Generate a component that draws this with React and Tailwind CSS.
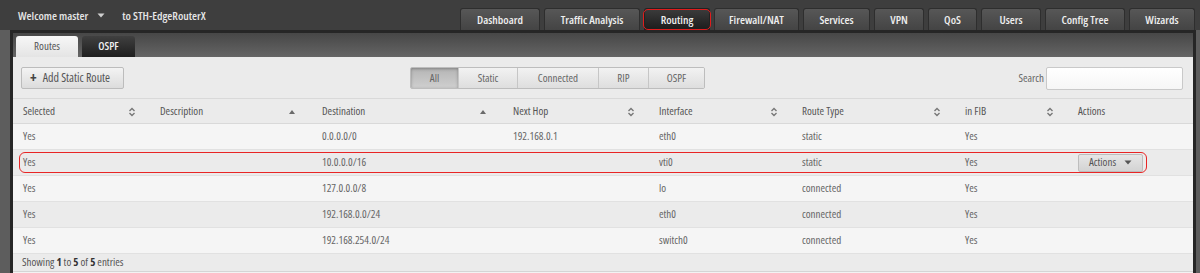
import React from 'react';

const navTabs = [
    { label: 'Dashboard', w: 'w-[80px]' },
    { label: 'Traffic Analysis', w: 'w-[96px]' },
    { label: 'Routing', w: 'w-[66px]', active: true },
    { label: 'Firewall/NAT', w: 'w-[85px]' },
    { label: 'Services', w: 'w-[67px]' },
    { label: 'VPN', w: 'w-[50px]' },
    { label: 'QoS', w: 'w-[49px]' },
    { label: 'Users', w: 'w-[60px]' },
    { label: 'Config Tree', w: 'w-[80px]' },
    { label: 'Wizards', w: 'w-[66px]' },
];

const filters = [
    { label: 'All', w: 'w-[47px]', active: true },
    { label: 'Static', w: 'w-[59px]' },
    { label: 'Connected', w: 'w-[81px]' },
    { label: 'RIP', w: 'w-[50px]' },
    { label: 'OSPF', w: 'w-[56px]' },
];

const columns = [
    { label: 'Selected', sort: 'both' },
    { label: 'Description', sort: 'up' },
    { label: 'Destination', sort: 'up' },
    { label: 'Next Hop', sort: 'both' },
    { label: 'Interface', sort: 'both' },
    { label: 'Route Type', sort: 'both' },
    { label: 'in FIB', sort: 'both' },
    { label: 'Actions', sort: null },
];

const routes = [
    { dest: '0.0.0.0/0', hop: '192.168.0.1', iface: 'eth0', type: 'static' },
    { dest: '10.0.0.0/16', hop: '', iface: 'vti0', type: 'static', marked: true },
    { dest: '127.0.0.0/8', hop: '', iface: 'lo', type: 'connected' },
    { dest: '192.168.0.0/24', hop: '', iface: 'eth0', type: 'connected' },
    { dest: '192.168.254.0/24', hop: '', iface: 'switch0', type: 'connected' },
];

const grid = 'grid grid-cols-[137px_162px_191px_146px_143px_163px_113px_124px]';

const SortIcon = ({ type }) => {
    if (type === 'up') {
        return (
            <svg width="8" height="6" viewBox="0 0 8 6" className="absolute right-[16px] top-[10px]">
                <path d="M4 1 L7 5 L1 5 Z" fill="#6a6a6a" />
            </svg>
        );
    }
    return (
        <svg width="8" height="10" viewBox="0 0 8 10" className="absolute right-[14px] top-[8px]">
            <path d="M1.5 4 L4 1.5 L6.5 4" stroke="#777" strokeWidth="1.4" fill="none" />
            <path d="M1.5 6 L4 8.5 L6.5 6" stroke="#777" strokeWidth="1.4" fill="none" />
        </svg>
    );
};

const Caret = ({ color = '#cfcfcf' }) => (
    <svg width="8" height="5" viewBox="0 0 8 5">
        <path d="M0.5 0.5 L7.5 0.5 L4 4.5 Z" fill={color} />
    </svg>
);

const App = () => {
    return (
        <div className="w-[1200px] h-[273px] overflow-hidden bg-[#5d5d5d] text-[11px] [font-stretch:80%] font-['Open_Sans',_'Liberation_Sans',_sans-serif]">
            {/* top bar */}
            <div className="h-[30px] bg-[#3e3e3e] flex items-end">
                <div className="h-[30px] flex items-center pl-[18px] pt-[2px] text-[11.5px] text-[#e6e6e6] font-semibold">
                    <span>Welcome master</span>
                    <span className="ml-[9px] mb-[1px]"><Caret /></span>
                    <span className="ml-[17px]">to STH-EdgeRouterX</span>
                </div>
                <div className="ml-auto mr-[5px] flex gap-[4px]">
                    {navTabs.map((t) => (
                        <div
                            key={t.label}
                            className={`relative ${t.w} h-[22px] flex items-center justify-center rounded-t-[3px] border border-b-0 font-semibold text-[11.5px] text-[#eeeeee] ${
                                t.active
                                    ? 'bg-gradient-to-b from-[#3c3c3c] to-[#1c1c1c] border-[#222]'
                                    : 'bg-gradient-to-b from-[#575757] to-[#444444] border-[#2e2e2e]'
                            }`}
                        >
                            {t.label}
                            {t.active && (
                                <div className="absolute -left-[2px] -right-[2px] top-0 bottom-0 rounded-[5px] border-[1.5px] border-[#e01d1d]" />
                            )}
                        </div>
                    ))}
                </div>
            </div>

            {/* main panel */}
            <div className="ml-[10px] w-[1186px] h-[260px] border-[3px] border-b-0 border-[#262626] bg-[#ebebeb]">
                {/* sub tabs */}
                <div className="h-[24px] bg-gradient-to-b from-[#474747] to-[#656565] flex items-end pl-[3px] gap-[4px]">
                    <div className="w-[62px] h-[21px] flex items-center justify-center rounded-t-[3px] bg-gradient-to-b from-[#f7f7f7] to-[#e4e4e4] text-[#555]">
                        Routes
                    </div>
                    <div className="w-[53px] h-[21px] flex items-center justify-center rounded-t-[3px] bg-gradient-to-b from-[#404040] to-[#1f1f1f] text-[#f0f0f0] font-semibold">
                        OSPF
                    </div>
                </div>

                {/* toolbar */}
                <div className="h-[41px] flex items-center pl-[8px] pr-[10px] pt-[1px]">
                    <button className="w-[103px] h-[22px] flex items-center pl-[8px] gap-[6px] whitespace-nowrap rounded-[2px] border border-[#bcbcbc] bg-gradient-to-b from-[#f3f3f3] to-[#dcdcdc] text-[12px] text-[#555]">
                        <span className="text-[14px] leading-none font-bold text-[#444]">+</span>
                        <span>Add Static Route</span>
                    </button>
                    <div className="ml-[286px] flex h-[22px] rounded-[2px] border border-[#bdbdbd] overflow-hidden">
                        {filters.map((f, i) => (
                            <div
                                key={f.label}
                                className={`${f.w} flex items-center justify-center text-[#666] ${i > 0 ? 'border-l border-[#c6c6c6]' : ''} ${
                                    f.active
                                        ? 'bg-gradient-to-b from-[#b5b5b5] to-[#cfcfcf] shadow-[inset_0_1px_3px_rgba(0,0,0,0.3)]'
                                        : 'bg-gradient-to-b from-[#f2f2f2] to-[#dedede]'
                                }`}
                            >
                                {f.label}
                            </div>
                        ))}
                    </div>
                    <span className="ml-auto text-[#666] mr-[2px]">Search</span>
                    <input className="w-[137px] h-[23px] border border-[#c9c9c9] rounded-[2px] bg-gradient-to-b from-[#ffffff] to-[#f6f6f6] outline-none" />
                </div>

                {/* table header */}
                <div className={`${grid} h-[26px] border-t border-b border-[#d9d9d9] text-[#555]`}>
                    {columns.map((c) => (
                        <div key={c.label} className="relative flex items-center pl-[10px]">
                            {c.label}
                            {c.sort && <SortIcon type={c.sort} />}
                        </div>
                    ))}
                </div>

                {/* rows */}
                {routes.map((r, i) => (
                    <div
                        key={r.dest}
                        className={`relative ${grid} h-[26px] border-b border-[#e1e1e1] text-[#666] ${i % 2 === 0 ? 'bg-[#f5f5f5]' : 'bg-[#ebebeb]'}`}
                    >
                        <div className="flex items-center pl-[10px]">Yes</div>
                        <div className="flex items-center pl-[10px]"></div>
                        <div className="flex items-center pl-[10px]">{r.dest}</div>
                        <div className="flex items-center pl-[10px]">{r.hop}</div>
                        <div className="flex items-center pl-[10px]">{r.iface}</div>
                        <div className="flex items-center pl-[10px]">{r.type}</div>
                        <div className="flex items-center pl-[10px]">Yes</div>
                        <div className="flex items-center pl-[10px]">
                            {r.marked && (
                                <button className="w-[65px] h-[18px] flex items-center justify-center gap-[8px] rounded-[2px] border border-[#bdbdbd] bg-gradient-to-b from-[#e6e6e6] to-[#d3d3d3] text-[#555]">
                                    Actions
                                    <Caret color="#555" />
                                </button>
                            )}
                        </div>
                        {r.marked && (
                            <div className="absolute left-[6px] w-[1128px] top-[2px] bottom-[2px] rounded-[6px] border-[1.5px] border-[#e82525]" />
                        )}
                    </div>
                ))}

                {/* footer */}
                <div className="h-[18px] flex items-center pl-[9px] text-[11px] text-[#555] border-b border-[#d5d5d5]">
                    Showing&nbsp;<b className="text-[#333]">1</b>&nbsp;to&nbsp;<b className="text-[#333]">5</b>&nbsp;of&nbsp;<b className="text-[#333]">5</b>&nbsp;entries
                </div>
                <div className="h-[10px] bg-[#f3f3f3]" />
            </div>
        </div>
    );
};

export default App;
